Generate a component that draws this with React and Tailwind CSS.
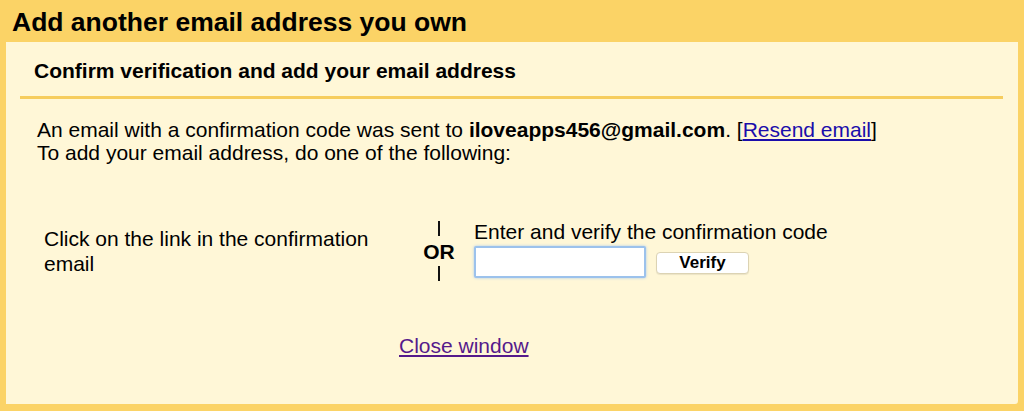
import React, { useState } from "react";

const App = () => {
  const [code, setCode] = useState("");

  return (
    <div className="w-full h-[411px] bg-[#fbd366] flex flex-col px-[6px] pb-[7px] font-['Liberation_Sans',Arial,sans-serif] text-black">
      {/* title bar */}
      <div className="h-[42px] flex items-center pl-[6px] pt-[2px]">
        <h1 className="text-[26.5px] font-bold leading-none">Add another email address you own</h1>
      </div>

      {/* panel */}
      <div className="flex-1 bg-[#fff7d7] rounded-br-[3px] flex flex-col">
        <div className="h-[54px] flex items-center pl-[28px] pt-[2px]">
          <h2 className="text-[21px] font-bold leading-none">Confirm verification and add your email address</h2>
        </div>
        <div className="h-[3px] bg-[#f6cd5e] ml-[14px] mr-[15px]" />

        <div className="pl-[31px] pt-[19px] text-[21px] leading-[23px]">
          <p>
            An email with a confirmation code was sent to <b>iloveapps456@gmail.com</b>. [
            <a href="#" className="text-[#1a0dab] underline">Resend email</a>]
          </p>
          <p>To add your email address, do one of the following:</p>
        </div>

        {/* two ways to confirm */}
        <div className="flex items-center pt-[51px]">
          <div className="w-[419px] pl-[38px] pr-[40px] text-[21px] leading-[25px] shrink-0">
            Click on the link in the confirmation email
          </div>
          <div className="w-[28px] h-[72px] flex flex-col items-center justify-between py-[6px] shrink-0">
            <div className="w-[2px] h-[15px] bg-[#111]" />
            <span className="font-bold text-[21px] leading-none">OR</span>
            <div className="w-[2px] h-[15px] bg-[#111]" />
          </div>
          <div className="flex flex-col ml-[21px] -mt-[4px]">
            <span className="text-[21px] leading-[22px]">Enter and verify the confirmation code</span>
            <div className="flex items-start gap-[10px] mt-[3px]">
              <input
                value={code}
                onChange={(e) => setCode(e.target.value)}
                className="w-[172px] h-[32px] bg-white border-2 border-[#9cc2ec] rounded-[2px] outline-none px-[5px] text-[18px] shadow-[0_0_3px_#a8c8f0]"
              />
              <button className="w-[93px] h-[22px] bg-white border border-[#dcd3b3] rounded-[4px] font-bold text-[17px] leading-none mt-[6px] shadow-[0_1px_1px_rgba(0,0,0,0.08)]">
                Verify
              </button>
            </div>
          </div>
        </div>

        <div className="pl-[393px] pt-[47px] text-[21px] leading-[24px]">
          <a href="#" className="text-[#551a8b] underline">Close window</a>
        </div>
      </div>
    </div>
  );
};

export default App;
